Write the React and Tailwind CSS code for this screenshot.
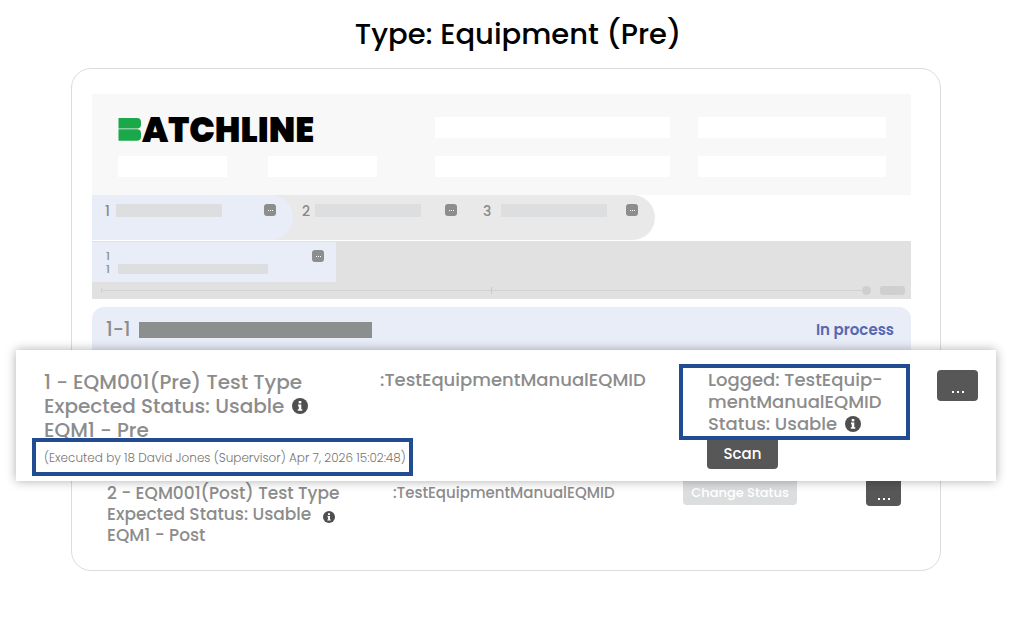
import React from "react";

const FONT = "font-['Poppins','Inter','Liberation_Sans',sans-serif]";

function InfoIcon({ className }) {
  return (
    <svg viewBox="0 0 16 16" className={className} role="img" aria-label="Info">
      <circle cx="8" cy="8" r="8" fill="#4f4f4f" />
      <rect x="6.7" y="3" width="2.6" height="2.4" fill="#fff" />
      <path d="M6 6.6h3.3v4.6h1v1.6H5.800v-1.6h1V8.200H6z" fill="#fff" />
    </svg>
  );
}

function DotsButton({ label }) {
  return (
    <button
      type="button"
      aria-label={label}
      className="flex size-3 shrink-0 items-center justify-center gap-px rounded-[3px] bg-[#8b8e8d]"
    >
      <span className="size-px bg-white" />
      <span className="size-px bg-white" />
      <span className="size-px bg-white" />
    </button>
  );
}

function MoreButton({ className }) {
  return (
    <button
      type="button"
      aria-label="More"
      className={`flex shrink-0 items-end justify-center gap-[3px] rounded bg-[#575757] ${className}`}
    >
      <span className="size-[2px] bg-white" />
      <span className="size-[2px] bg-white" />
      <span className="size-[2px] bg-white" />
    </button>
  );
}

function Logo() {
  return (
    <div className="flex h-6 items-center">
      <svg viewBox="0 0 24 24" className="size-6 shrink-0" role="img" aria-label="B">
        <path d="M0.500 1h18.500a4 4 0 0 1 4 4v2.500a4 4 0 0 1-4 4H0.500z" fill="#1ba84a" />
        <path d="M0.500 12.300h18.500a4 4 0 0 1 4 4v3.500a4 4 0 0 1-4 4H0.500z" fill="#1ba84a" />
      </svg>
      <span className="pt-px text-[34px] leading-6 font-black text-black">ATCHLINE</span>
    </div>
  );
}

function Tab({ number, className, numberClass }) {
  return (
    <div className={`flex items-start pt-[9px] pr-[17px] ${className}`}>
      <span className={`text-sm leading-[14px] font-medium text-[#8a8a8a] ${numberClass}`}>
        {number}
      </span>
      <span className="h-[13px] w-[106px] bg-[#dcdedf]" />
      <span className="ml-auto">
        <DotsButton label={`Options for ${number}`} />
      </span>
    </div>
  );
}

export default function App() {
  return (
    <main className={`${FONT} bg-white pr-7 pb-12 pl-4 text-[#8c8c8c]`}>
      <h1 className="pl-6 text-center text-[29px] leading-[68px] font-medium text-black">
        Type: Equipment (Pre)
      </h1>

      <section className="mx-[55px] rounded-[20px] border border-[#dcdcdc] pt-[25px] pr-[29px] pb-6 pl-5">
        <header className="flex h-[101px] bg-[#f8f8f8] pt-[23px] pr-[25px] pl-[26px]">
          <div className="mr-[58px] flex flex-[259] flex-col gap-[15px]">
            <Logo />
            <div className="flex gap-[41px]">
              <span className="h-[21px] flex-1 bg-white" />
              <span className="h-[21px] flex-1 bg-white" />
            </div>
          </div>
          <div className="mr-7 flex flex-[235] flex-col gap-[18px]">
            <span className="h-[21px] bg-white" />
            <span className="h-[21px] bg-white" />
          </div>
          <div className="flex flex-[188] flex-col gap-[18px]">
            <span className="h-[21px] bg-white" />
            <span className="h-[21px] bg-white" />
          </div>
        </header>

        <nav aria-label="Phases" className="mb-px flex h-[45px] w-fit rounded-r-full bg-[#e9e9e9]">
          <Tab number="1" className="w-[201px] rounded-r-full bg-[#e8edf8] pl-[13px]" numberClass="w-[11px]" />
          <Tab number="2" className="w-[181px] pl-[9px]" numberClass="w-[13px]" />
          <Tab number="3" className="w-[181px] pl-[9px]" numberClass="w-[18px]" />
        </nav>

        <div className="h-[58px] bg-[#e1e1e1] pt-px">
          <div className="flex h-10 w-[244px] items-start bg-[#e8edf8] pt-2 pr-3 pl-[14px] text-[11px] leading-[13px] font-medium">
            <div className="w-3">
              <div>1</div>
              <div>1</div>
            </div>
            <span className="mt-[14px] h-[10px] w-[150px] bg-[#dcdedf]" />
            <span className="ml-auto">
              <DotsButton label="Step options" />
            </span>
          </div>
          <div className="flex h-[17px] items-center pr-[6px] pl-[9px]">
            <span className="h-[5px] w-px bg-[#d2d2d2]" />
            <span className="h-px flex-[390] bg-[#d2d2d2]" />
            <span className="h-[7px] w-px bg-[#c9c9c9]" />
            <span className="h-px flex-[370] bg-[#d2d2d2]" />
            <span className="size-[9px] rounded-full bg-[#cfcfcf]" />
            <span className="ml-[9px] h-[9px] w-[25px] rounded-[3px] bg-[#cfcfcf]" />
          </div>
        </div>

        <div className="mt-2 flex h-[43px] items-center rounded-t-xl bg-[#e8edf8] pt-[3px] pr-[17px] pl-[14px]">
          <span className="w-[33px] text-[19px] font-medium">1-1</span>
          <span className="h-4 w-[233px] bg-[#8b908f]" />
          <span className="ml-auto pt-px text-[15px] font-semibold text-[#5868b0]">In process</span>
        </div>

        <article className="relative z-10 -mr-[85px] -ml-[76px] flex h-[131px] items-start bg-white pr-[18px] pl-7 shadow-[0_0_10px_rgba(0,0,0,0.32)]">
          <div className="w-[336px] pt-5 text-xl leading-6 font-medium">
            <p>1 - EQM001(Pre) Test Type</p>
            <p className="flex items-center gap-2">
              Expected Status: Usable <InfoIcon className="size-4" />
            </p>
            <p>EQM1 - Pre</p>
            <p className="relative -mt-1 -ml-3 flex h-[38px] w-[381px] items-center border-4 border-[#214c92] bg-white pt-px pl-2 text-xs font-light whitespace-nowrap text-[#757575]">
              (Executed by 18 David Jones (Supervisor) Apr 7, 2026 15:02:48)
            </p>
          </div>
          <p className="flex-1 pt-[18px] text-lg leading-6 font-medium">
            :TestEquipmentManualEQMID
          </p>
          <div className="mt-[14px] mr-[27px] w-[231px]">
            <div className="flex h-[76px] flex-col justify-center border-4 border-[#214c92] pl-[25px] text-lg leading-[22px] font-medium whitespace-nowrap">
              <p>Logged: TestEquip-</p>
              <p>mentManualEQMID</p>
              <p className="flex items-center gap-2">
                Status: Usable <InfoIcon className="size-4" />
              </p>
            </div>
            <button
              type="button"
              className="ml-7 h-[29px] w-[71px] rounded-b bg-[#575757] text-[15px] font-medium text-white"
            >
              Scan
            </button>
          </div>
          <MoreButton className="mt-5 h-[31px] w-[41px] pb-2" />
        </article>

        <article className="flex items-start pr-[10px] pl-[15px] font-medium">
          <div className="w-[286px] pt-[2px] text-[17px] leading-[21px]">
            <p>2 - EQM001(Post) Test Type</p>
            <p className="flex items-center gap-3">
              Expected Status: Usable <InfoIcon className="mt-1 size-3" />
            </p>
            <p>EQM1 - Post</p>
          </div>
          <p className="flex-1 text-[15px] leading-6">:TestEquipmentManualEQMID</p>
          <button
            type="button"
            className="mr-[69px] h-6 w-[114px] rounded-b-sm bg-[#dcddde] text-[13px] font-medium text-white"
          >
            Change Status
          </button>
          <MoreButton className="h-[25px] w-[35px] rounded-t-none pb-[6px]" />
        </article>
      </section>
    </main>
  );
}
